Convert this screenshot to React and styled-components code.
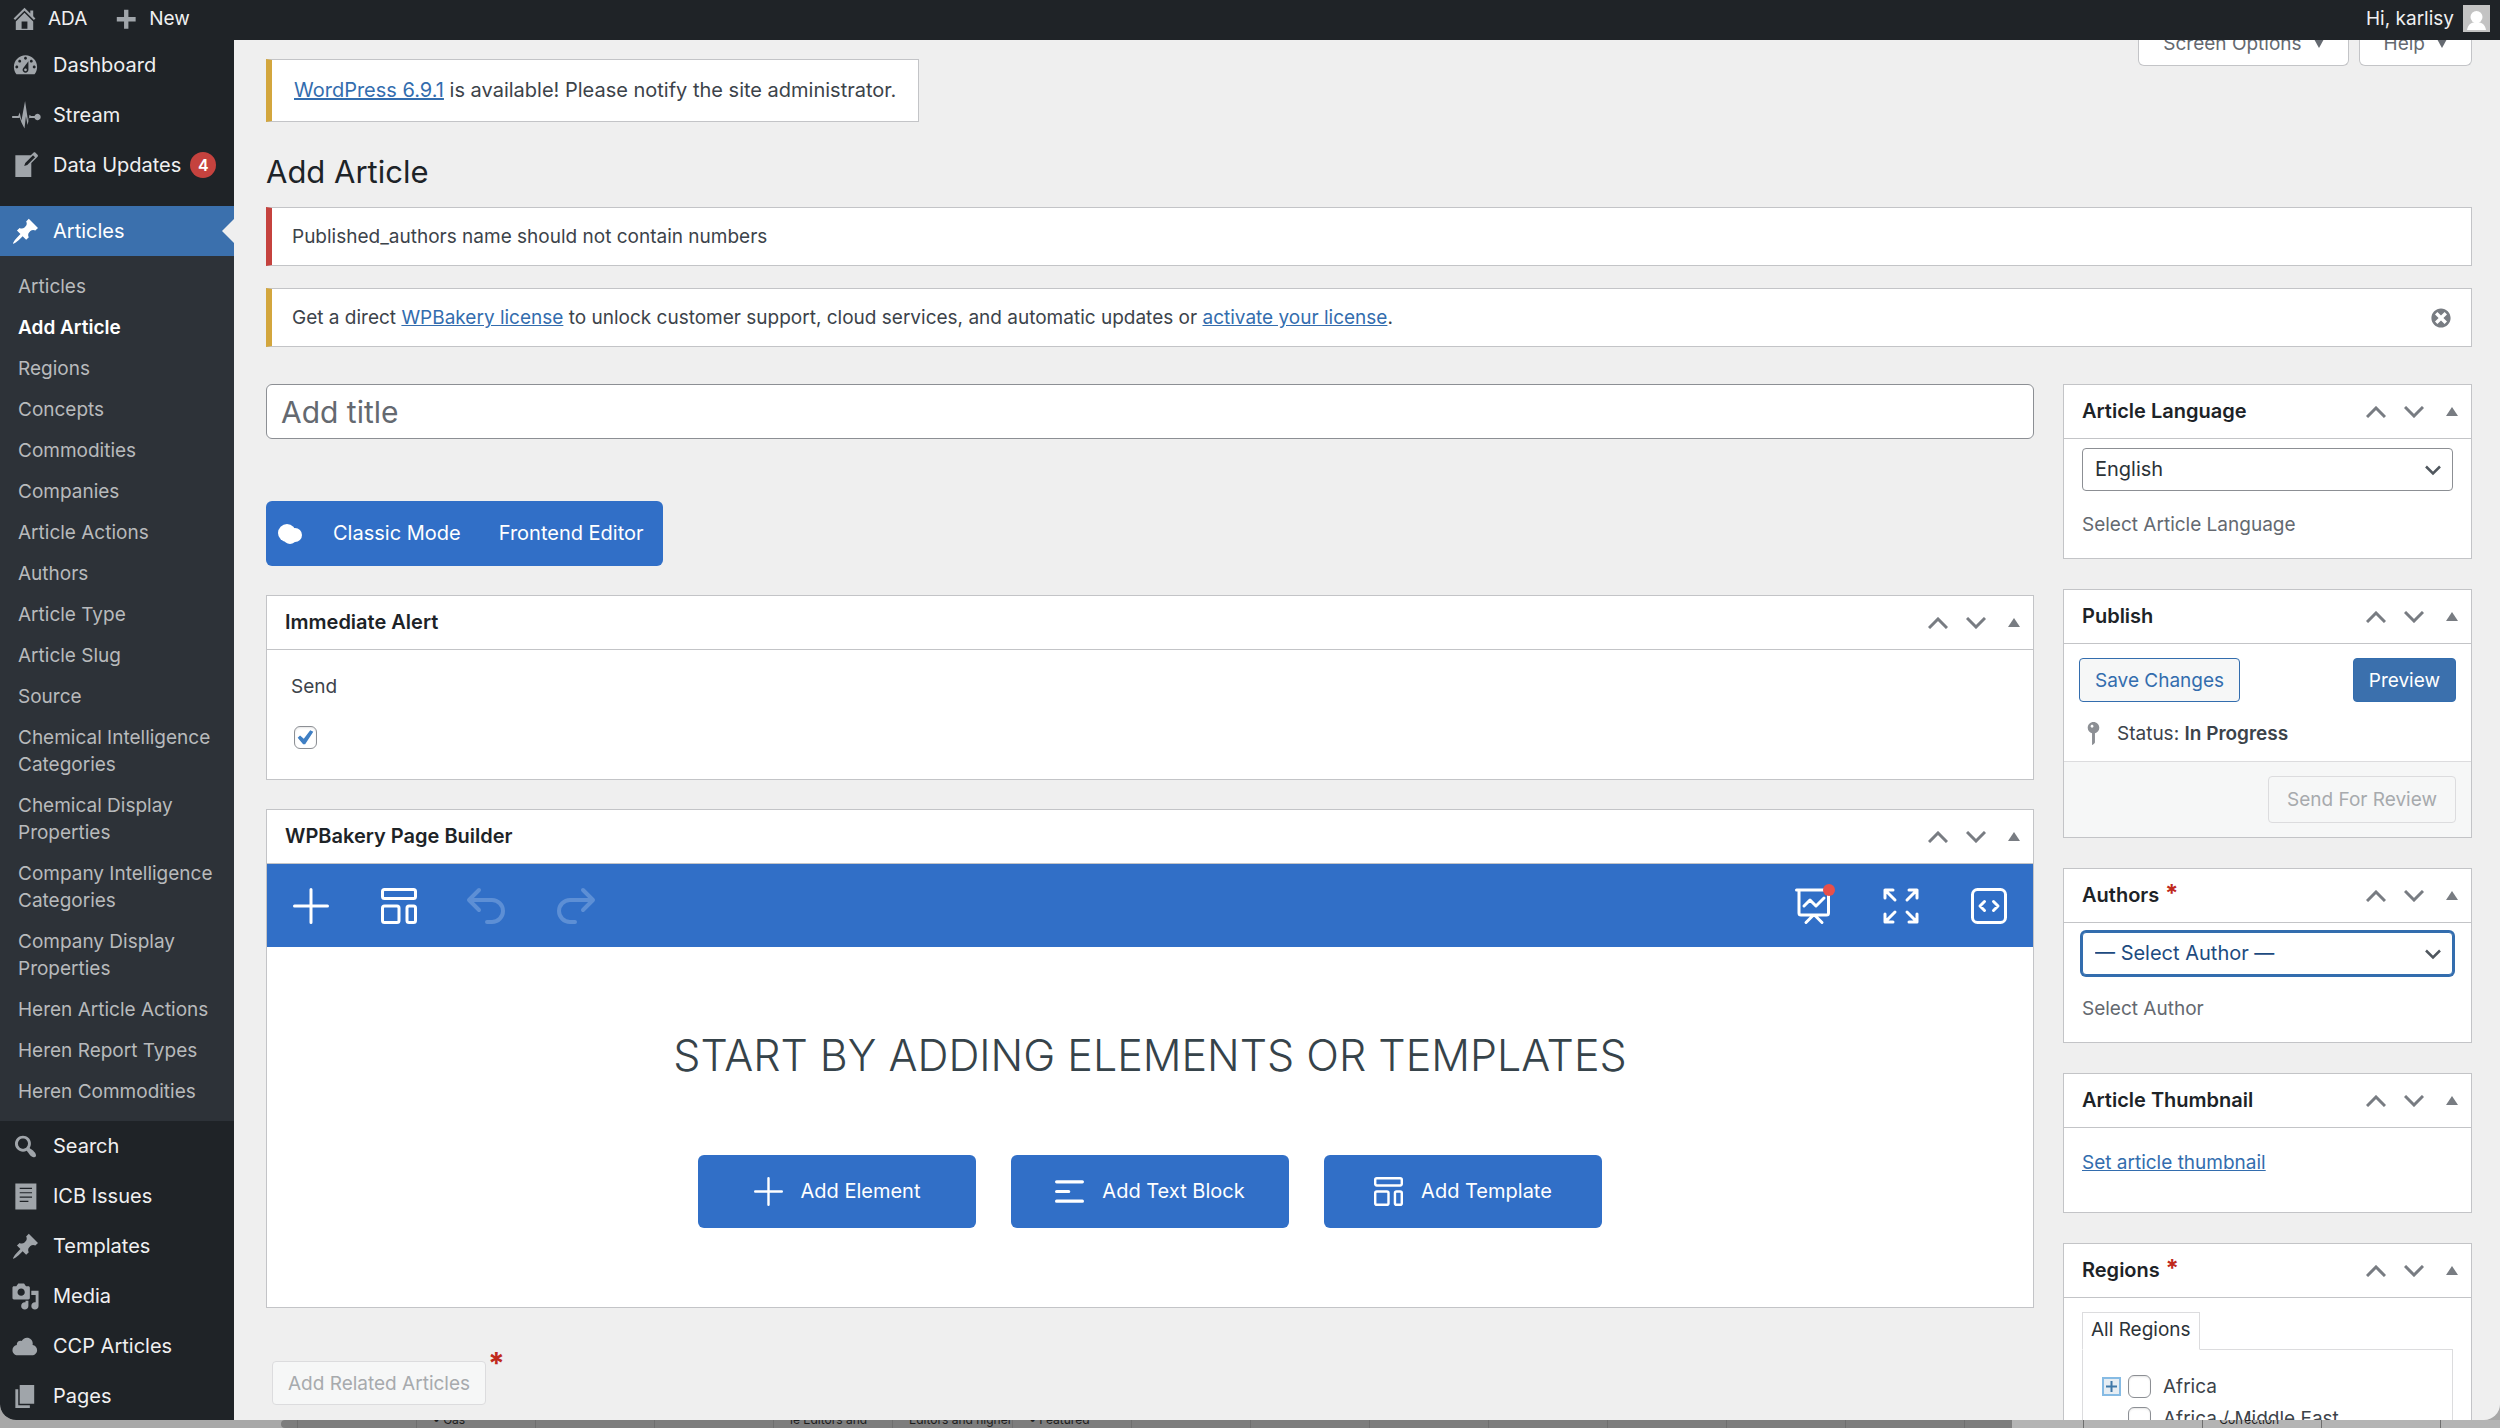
import React from 'react'
import styled, { createGlobalStyle } from 'styled-components'

const submenu = [
    'Articles', 'Add Article', 'Regions', 'Concepts', 'Commodities', 'Companies',
    'Article Actions', 'Authors', 'Article Type', 'Article Slug', 'Source',
    'Chemical Intelligence Categories', 'Chemical Display Properties',
    'Company Intelligence Categories', 'Company Display Properties',
    'Heren Article Actions', 'Heren Report Types', 'Heren Commodities',
]

const backTable = ['', '• Gas', '', '', 'le Editors and', 'Editors and higher', '• Featured', '', '', '', '', '', '', '', '', '', 'Correction', '', '']

const paths = {
    home: 'M16 8.5l1.53 1.53-1.06 1.06L10 4.6l-6.47 6.49-1.06-1.06L10 2.5l4 4v-2h2v4zm-6-2.46l6 5.99V18H4v-5.97zM12 17v-5H8v5h4z',
    plus: 'M17 9v3h-5v5H9v-5H4V9h5V4h3v5h5z',
    dashboard: 'M3.76 16h12.48c1.1-1.37 1.76-3.11 1.76-5 0-4.42-3.58-8-8-8s-8 3.58-8 8c0 1.89.66 3.63 1.76 5zM10 4c.55 0 1 .45 1 1s-.45 1-1 1-1-.45-1-1 .45-1 1-1zM6 6c.55 0 1 .45 1 1s-.45 1-1 1-1-.45-1-1 .45-1 1-1zm8 0c.55 0 1 .45 1 1s-.45 1-1 1-1-.45-1-1 .45-1 1-1zm-5.37 5.55L12 7v6c0 1.1-.9 2-2 2s-2-.9-2-2c0-.57.24-1.08.63-1.45zM4 10c.55 0 1 .45 1 1s-.45 1-1 1-1-.45-1-1 .45-1 1-1zm12 0c.55 0 1 .45 1 1s-.45 1-1 1-1-.45-1-1 .45-1 1-1zm-5 3c0-.55-.45-1-1-1s-1 .45-1 1 .45 1 1 1 1-.45 1-1z',
    stream: 'M.8 10.300H5L6 8 7.200 13.500 9.700 0 11.800 14 12.800 9.500 13.800 10.300H16.200A2.200 2.200 0 1 1 16.200 11.700H13.300L12.600 11.500 11.400 16.500 10.300 10.500 9.300 19 7.200 14.800 6 11.300 5.600 11.700H.8z',
    write: 'M16.89 1.2l1.41 1.41c.39.39.39 1.02 0 1.41L14 8.33V18H3V3h10.67l1.8-1.8c.4-.39 1.03-.4 1.42 0zm-5.66 8.48l5.37-5.36-1.42-1.42-5.36 5.37-.71 2.12z',
    pin: 'M10.44 3.02l1.82-1.82 6.36 6.35-1.83 1.82c-1.05-.68-2.48-.57-3.41.36l-.75.75c-.92.93-1.04 2.35-.35 3.41l-1.83 1.82-2.41-2.41-2.8 2.79c-.42.42-3.38 2.71-3.8 2.29s1.86-3.39 2.28-3.81l2.79-2.79L4.1 9.36l1.83-1.82c1.05.69 2.48.57 3.4-.36l.75-.75c.93-.92 1.05-2.35.36-3.41z',
    search: 'M12.14 4.18c1.87 1.87 2.11 4.75.72 6.89.12.1.22.21.36.31.2.16.47.36.81.59.34.24.56.39.66.47.42.31.73.57.94.78.32.32.6.65.84 1 .25.35.44.69.59 1.04.14.35.21.68.18 1-.02.32-.14.59-.36.81s-.49.34-.81.36c-.31.02-.65-.04-.99-.19-.35-.14-.7-.34-1.04-.59-.35-.24-.68-.52-1-.84-.21-.21-.47-.52-.77-.93-.1-.13-.25-.35-.47-.66-.22-.32-.4-.57-.56-.78-.16-.2-.29-.35-.44-.5-2.07 1.09-4.69.76-6.44-.98-2.14-2.15-2.14-5.64 0-7.78 2.15-2.15 5.63-2.15 7.78 0zm-1.41 6.36c1.36-1.37 1.36-3.58 0-4.95-1.37-1.37-3.59-1.37-4.95 0-1.37 1.37-1.37 3.58 0 4.95 1.36 1.37 3.58 1.37 4.95 0z',
    page: 'M3 1h14.5v18H3zM6 4v.8h8.500V4zM6 7v.8h8.500V7zM6 10v.8h8.500V10zM6 13v.8h6V13z',
    media: 'M13 11V4c0-.55-.45-1-1-1h-1.67L9 1H5L3.67 3H2c-.55 0-1 .45-1 1v7c0 .55.45 1 1 1h10c.55 0 1-.45 1-1zM7 4.500c1.380 0 2.500 1.120 2.500 2.500S8.380 9.500 7 9.500 4.500 8.380 4.500 7 5.620 4.500 7 4.500zM14 6h5v10.500c0 1.380-1.120 2.500-2.500 2.500S14 17.880 14 16.500s1.120-2.500 2.500-2.500c.17 0 .34.02.5.05V9h-3V6zm-4 8.050V13h2v3.500c0 1.380-1.120 2.500-2.500 2.500S7 17.880 7 16.500 8.120 14 9.500 14c.17 0 .34.02.5.05z',
    cloud: 'M14.9 9c1.8.2 3.1 1.7 3.1 3.5 0 1.9-1.6 3.5-3.5 3.5h-10C2.6 16 1 14.4 1 12.5 1 10.7 2.3 9.3 4.1 9 4 8.9 4 8.7 4 8.5 4 7.1 5.1 6 6.5 6c.3 0 .7.1.9.2C8.1 4.9 9.4 4 11 4c2.2 0 4 1.8 4 4 0 .4-.1.7-.1 1z',
    pages: 'M6 15V2h10v13H6zm-1 1h8v2H3V5h2v11z',
    dismiss: 'M10 2c4.42 0 8 3.58 8 8s-3.58 8-8 8-8-3.58-8-8 3.58-8 8-8zm5 11l-3-3 3-3-2-2-3 3-3-3-2 2 3 3-3 3 2 2 3-3 3 3z',
    status: 'M14 6c0 1.86-1.28 3.41-3 3.86V16c0 1-2 2-2 2V9.86c-1.72-.45-3-2-3-3.86 0-2.21 1.79-4 4-4s4 1.79 4 4zM8 5c0 .55.45 1 1 1s1-.45 1-1-.45-1-1-1-1 .45-1 1z',
}

function Dashicon({ name, size = 29 }) {
    return (
        <svg width={size} height={size} viewBox="0 0 20 20" fill="currentColor" fillRule="evenodd" overflow="visible" aria-hidden="true">
            <path d={paths[name]} />
        </svg>
    )
}

function LineIcon({ size = 36, width = 3, children }) {
    return (
        <svg width={size} height={size} viewBox="0 0 36 36" fill="none" stroke="currentColor" strokeWidth={width} strokeLinecap="round" strokeLinejoin="round" overflow="visible" aria-hidden="true">
            {children}
        </svg>
    )
}

const PlusLines = () => <path d="M18 1.500V34.500M1.500 18H34.500" />

const TemplateLines = () => (
    <>
        <rect x="1.500" y="1.500" width="33" height="9" rx="2" />
        <rect x="1.500" y="18" width="16.500" height="16.500" rx="2" />
        <rect x="26" y="18" width="8.500" height="16.500" rx="2" />
    </>
)

function Panel({ title, required, children }) {
    return (
        <PanelBox>
            <PanelHeader>
                <h2>{title}{required && <Required> *</Required>}</h2>
                <PanelActions>
                    <IconButton aria-label={`Move ${title} up`}>
                        <svg width="20" height="12" viewBox="0 0 20 12" fill="none" stroke="currentColor" strokeWidth="3"><path d="M1 11l9-9 9 9" /></svg>
                    </IconButton>
                    <IconButton aria-label={`Move ${title} down`}>
                        <svg width="20" height="12" viewBox="0 0 20 12" fill="none" stroke="currentColor" strokeWidth="3"><path d="M1 1l9 9 9-9" /></svg>
                    </IconButton>
                    <IconButton aria-label={`Toggle ${title}`}>
                        <svg width="12" height="10" viewBox="0 0 12 10" fill="currentColor"><path d="M6 0l6 9H0z" /></svg>
                    </IconButton>
                </PanelActions>
            </PanelHeader>
            {children}
        </PanelBox>
    )
}

function SelectField({ id, value, hint, active }) {
    return (
        <FieldBody>
            <SelectWrap>
                <Select id={id} $active={active} defaultValue={value}>
                    <option>{value}</option>
                </Select>
                <svg width="18" height="11" viewBox="0 0 18 11" fill="none" stroke="#50575e" strokeWidth="2.500"><path d="M2 1.500l7 7 7-7" /></svg>
            </SelectWrap>
            <Hint htmlFor={id}>{hint}</Hint>
        </FieldBody>
    )
}

function MenuItem({ icon, label, count, current }) {
    return (
        <MenuLink href="#" $current={current}>
            <Dashicon name={icon} />
            <span>{label}</span>
            {count && <Count>{count}</Count>}
        </MenuLink>
    )
}

function Sidebar() {
    return (
        <Side>
            <MenuItem icon="dashboard" label="Dashboard" />
            <MenuItem icon="stream" label="Stream" />
            <MenuItem icon="write" label="Data Updates" count="4" />
            <Separator />
            <MenuItem icon="pin" label="Articles" current />
            <Submenu>
                {submenu.map((item) => (
                    <li key={item}>
                        <SubLink href="#" $current={item === 'Add Article'}>{item}</SubLink>
                    </li>
                ))}
            </Submenu>
            <MenuItem icon="search" label="Search" />
            <MenuItem icon="page" label="ICB Issues" />
            <MenuItem icon="pin" label="Templates" />
            <MenuItem icon="media" label="Media" />
            <MenuItem icon="cloud" label="CCP Articles" />
            <MenuItem icon="pages" label="Pages" />
        </Side>
    )
}

function Builder() {
    return (
        <Panel title="WPBakery Page Builder">
            <Toolbar>
                <ToolButton aria-label="Add element"><LineIcon><PlusLines /></LineIcon></ToolButton>
                <ToolButton aria-label="Templates"><LineIcon><TemplateLines /></LineIcon></ToolButton>
                <ToolButton aria-label="Undo" disabled>
                    <LineIcon width={4}><path d="M10 2L0 12l10 10M1 12h22a11 11 0 0 1 0 22h-5" /></LineIcon>
                </ToolButton>
                <ToolButton aria-label="Redo" disabled>
                    <LineIcon width={4}><path d="M26 2l10 10-10 10M35 12H13a11 11 0 0 0 0 22h5" /></LineIcon>
                </ToolButton>
                <Spacer />
                <ToolButton aria-label="SEO">
                    <LineIcon>
                        <path d="M1.500 2H34M4 2V25a2 2 0 0 0 2 2H31.500a2 2 0 0 0 2-2V2M11 34.500l7-7h2l7 7M9 18l6-6 6 6 8-8" />
                        <circle cx="34" cy="2" r="6" fill="#e8504a" stroke="none" />
                    </LineIcon>
                </ToolButton>
                <ToolButton aria-label="Fullscreen">
                    <LineIcon><path d="M2 10V2h8M2 2l10 10M26 2h8v8M34 2L24 12M2 26v8h8M2 34l10-10M34 26v8h-8M34 34L24 24" /></LineIcon>
                </ToolButton>
                <ToolButton aria-label="Custom code">
                    <LineIcon><rect x="1.500" y="1.500" width="33" height="33" rx="5" /><path d="M13.500 13.500L9 18l4.500 4.500M22.500 13.500l4.500 4.500-4.500 4.500" /></LineIcon>
                </ToolButton>
            </Toolbar>
            <EmptyState>
                <h1>START BY ADDING ELEMENTS OR TEMPLATES</h1>
                <BigButtons>
                    <BigButton><LineIcon size={29}><PlusLines /></LineIcon>Add Element</BigButton>
                    <BigButton><LineIcon size={29} width={4}><path d="M2 6H34M2 18H17M2 30H34" /></LineIcon>Add Text Block</BigButton>
                    <BigButton><LineIcon size={29}><TemplateLines /></LineIcon>Add Template</BigButton>
                </BigButtons>
            </EmptyState>
        </Panel>
    )
}

function RightColumn() {
    return (
        <Column $gap="30px">
            <Panel title="Article Language">
                <SelectField id="language" value="English" hint="Select Article Language" />
            </Panel>
            <Panel title="Publish">
                <PublishBody>
                    <ButtonRow>
                        <Button>Save Changes</Button>
                        <Button $primary>Preview</Button>
                    </ButtonRow>
                    <Status>
                        <Dashicon name="status" />
                        <span>Status: <b>In Progress</b></span>
                    </Status>
                </PublishBody>
                <PublishFooter>
                    <Button $large disabled>Send For Review</Button>
                </PublishFooter>
            </Panel>
            <Panel title="Authors" required>
                <SelectField id="author" value="— Select Author —" hint="Select Author" active />
            </Panel>
            <Panel title="Article Thumbnail">
                <ThumbnailBody><Anchor href="#">Set article thumbnail</Anchor></ThumbnailBody>
            </Panel>
            <Panel title="Regions" required>
                <RegionsBody>
                    <Tab>All Regions</Tab>
                    <RegionList>
                        <RegionRow>
                            <Expand aria-label="Expand Africa">
                                <svg width="11" height="11" viewBox="0 0 11 11" stroke="#3f78a8" strokeWidth="2"><path d="M5.500 0v11M0 5.500h11" /></svg>
                            </Expand>
                            <Checkbox type="checkbox" id="africa" />
                            <label htmlFor="africa">Africa</label>
                        </RegionRow>
                        <RegionRow>
                            <ExpandSpace />
                            <Checkbox type="checkbox" id="africa-me" />
                            <label htmlFor="africa-me">Africa / Middle East</label>
                        </RegionRow>
                    </RegionList>
                </RegionsBody>
            </Panel>
        </Column>
    )
}

function App() {
    return (
        <Desktop>
            <GlobalStyle />
            <Window>
                <AdminBar>
                    <BarLink href="#"><Dashicon name="home" />ADA</BarLink>
                    <BarLink href="#"><Dashicon name="plus" />New</BarLink>
                    <Account href="#">
                        Hi, karlisy
                        <Avatar viewBox="0 0 27 27" aria-hidden="true">
                            <rect width="27" height="27" fill="#c3c3c3" />
                            <circle cx="13.500" cy="12" r="6" fill="#fff" />
                            <path d="M4 25c1-6 5-8 9.500-8s8.500 2 9.500 8z" fill="#fff" />
                        </Avatar>
                    </Account>
                </AdminBar>
                <Body>
                    <Sidebar />
                    <Main>
                        <TopRow>
                            <UpdateNag>
                                <Anchor href="#">WordPress 6.9.1</Anchor> is available! Please notify the site administrator.
                            </UpdateNag>
                            <ScreenMeta>
                                <MetaButton>Screen Options <Caret viewBox="0 0 10 9"><path d="M0 0h10L5 9z" /></Caret></MetaButton>
                                <MetaButton>Help <Caret viewBox="0 0 10 9"><path d="M0 0h10L5 9z" /></Caret></MetaButton>
                            </ScreenMeta>
                        </TopRow>
                        <PageTitle>Add Article</PageTitle>
                        <Notices>
                            <Notice $color="#c5423e">Published_authors name should not contain numbers</Notice>
                            <Notice $color="#d3a63d">
                                <p>
                                    Get a direct <Anchor href="#">WPBakery license</Anchor> to unlock customer support, cloud services, and automatic updates or <Anchor href="#">activate your license</Anchor>.
                                </p>
                                <IconButton aria-label="Dismiss this notice"><Dashicon name="dismiss" size={24} /></IconButton>
                            </Notice>
                        </Notices>
                        <Columns>
                            <Column $gap="29px">
                                <TitleInput type="text" placeholder="Add title" aria-label="Add title" />
                                <ModeBar>
                                    <svg width="24" height="20" viewBox="0 0 24 20" fill="#fff" aria-hidden="true">
                                        <circle cx="9" cy="9" r="9" /><circle cx="17" cy="11" r="7" /><ellipse cx="12" cy="15" rx="6" ry="5" />
                                    </svg>
                                    <ModeButton>Classic Mode</ModeButton>
                                    <ModeButton>Frontend Editor</ModeButton>
                                </ModeBar>
                                <Panel title="Immediate Alert">
                                    <AlertBody>
                                        <label htmlFor="send">Send</label>
                                        <Checkbox type="checkbox" id="send" defaultChecked />
                                    </AlertBody>
                                </Panel>
                                <Builder />
                                <RelatedRow>
                                    <Button disabled>Add Related Articles</Button>
                                    <Required $large>*</Required>
                                </RelatedRow>
                            </Column>
                            <RightColumn />
                        </Columns>
                    </Main>
                </Body>
            </Window>
            <BackWindow>
                {backTable.map((cell, i) => <BackCell key={i}>{cell}</BackCell>)}
            </BackWindow>
        </Desktop>
    )
}

export default App;

const GlobalStyle = createGlobalStyle`
    *{
        box-sizing:border-box;
    }
    body{
        margin:0;
        font-family:Inter, "Open Sans", sans-serif;
        font-size:19px;
        line-height:27px;
        color:#3c434a;
    }
    h1, h2, p, ul{
        margin:0;
        padding:0;
        list-style:none;
    }
    button, input, select{
        font:inherit;
        margin:0;
    }
    svg{
        display:block;
        flex-shrink:0;
    }
`
const Desktop = styled.div`
    height:100vh;
    display:flex;
    flex-direction:column;
    background-color:#a8a8a8;
`
const Window = styled.div`
    flex:1;
    min-height:0;
    display:flex;
    flex-direction:column;
    overflow:hidden;
    border-radius:0 0 16px 16px;
    background-color:#efefef;
`
const BackWindow = styled.div`
    height:8px;
    margin-left:281px;
    padding-left:16px;
    display:flex;
    overflow:hidden;
    border-radius:4px 0 0 4px;
    background:linear-gradient(to right, #7d7d7d 78%, #b4b4b4 78%);
`
const BackCell = styled.span`
    flex:0 0 119px;
    display:flex;
    align-items:flex-end;
    padding-left:16px;
    border-left:1px solid #6f6f6f;
    font-size:12px;
    line-height:16px;
    white-space:nowrap;
    color:#1c1c1c;
`
const AdminBar = styled.header`
    flex:0 0 40px;
    display:flex;
    align-items:center;
    padding:0 10px 3px;
    gap:24px;
    background-color:#1f2327;
    z-index:1;
`
const BarLink = styled.a`
    display:flex;
    align-items:center;
    gap:9px;
    color:#f0f0f1;
    text-decoration:none;
    svg{
        color:#a0a5aa;
    }
`
const Account = styled(BarLink)`
    margin-left:auto;
`
const Avatar = styled.svg`
    width:27px;
    height:27px;
`
const Body = styled.div`
    flex:1;
    min-height:0;
    display:flex;
`
const Side = styled.nav`
    flex:0 0 234px;
    background-color:#1f2327;
`
const MenuLink = styled.a`
    height:50px;
    display:flex;
    align-items:center;
    padding-left:11px;
    gap:13px;
    font-size:20px;
    color:${(p) => (p.$current ? '#fff' : '#f0f0f1')};
    background-color:${(p) => (p.$current ? '#3b70ad' : 'transparent')};
    text-decoration:none;
    white-space:nowrap;
    svg{
        color:${(p) => (p.$current ? '#fff' : '#a0a5aa')};
    }
    &::after{
        content:'';
        display:${(p) => (p.$current ? 'block' : 'none')};
        margin-left:auto;
        border:12px solid transparent;
        border-left:0;
        border-right-color:#efefef;
    }
`
const Count = styled.span`
    width:26px;
    height:26px;
    border-radius:13px;
    margin-left:-4px;
    background-color:#c5423e;
    color:#fff;
    font-size:16px;
    font-weight:600;
    line-height:26px;
    text-align:center;
`
const Separator = styled.div`
    height:16px;
`
const Submenu = styled.ul`
    && {
        padding:10px 0 9px;
    }
    background-color:#2d3238;
`
const SubLink = styled.a`
    display:block;
    padding:7px 18px;
    color:${(p) => (p.$current ? '#fff' : '#b8babc')};
    font-weight:${(p) => (p.$current ? 600 : 400)};
    text-decoration:none;
`
const Main = styled.main`
    flex:1;
    min-width:0;
    padding:0 28px 0 32px;
`
const TopRow = styled.div`
    display:flex;
    justify-content:space-between;
    align-items:flex-start;
`
const UpdateNag = styled.div`
    margin-top:19px;
    padding:17px 22px;
    border:1px solid #c3c4c7;
    border-left:6px solid #d3a63d;
    background-color:#fff;
    font-size:20px;
`
const Anchor = styled.a`
    color:#336dae;
    text-decoration:underline;
`
const ScreenMeta = styled.div`
    display:flex;
    gap:10px;
    margin-top:-18px;
`
const MetaButton = styled.button`
    display:flex;
    align-items:center;
    gap:12px;
    height:44px;
    padding:0 24px;
    border:1px solid #c3c4c7;
    border-top:0;
    border-radius:0 0 6px 6px;
    background-color:#fff;
    color:#646970;
`
const Caret = styled.svg`
    width:10px;
    height:9px;
    fill:#646970;
`
const PageTitle = styled.h1`
    padding:29px 0 14px;
    font-size:31px;
    font-weight:400;
    line-height:42px;
    color:#1d2327;
`
const Notices = styled.div`
    display:flex;
    flex-direction:column;
    gap:22px;
`
const Notice = styled.div`
    height:59px;
    display:flex;
    align-items:center;
    justify-content:space-between;
    padding:0 11px 0 20px;
    border:1px solid #c3c4c7;
    border-left:6px solid ${(p) => p.$color};
    background-color:#fff;
`
const IconButton = styled.button`
    width:38px;
    height:38px;
    display:flex;
    align-items:center;
    justify-content:center;
    padding:0;
    border:0;
    background:none;
    color:#787c82;
`
const Columns = styled.div`
    display:grid;
    grid-template-columns:minmax(0, 1fr) 409px;
    gap:29px;
    align-items:start;
    padding-top:37px;
`
const Column = styled.div`
    display:flex;
    flex-direction:column;
    align-items:stretch;
    gap:${(p) => p.$gap};
`
const TitleInput = styled.input`
    height:55px;
    padding:0 14px;
    margin-bottom:33px;
    border:1px solid #8c8f94;
    border-radius:6px;
    background-color:#fff;
    font-size:30px;
    &::placeholder{
        color:#646970;
    }
`
const ModeBar = styled.div`
    align-self:flex-start;
    height:65px;
    display:flex;
    align-items:center;
    padding:0 0 0 12px;
    border-radius:6px;
    background-color:#316fc7;
    svg{
        margin-right:12px;
    }
`
const ModeButton = styled.button`
    height:65px;
    padding:0 19px;
    border:0;
    background:none;
    color:#fff;
    font-size:20px;
`
const PanelBox = styled.section`
    border:1px solid #c3c4c7;
    background-color:#fff;
`
const PanelHeader = styled.div`
    height:54px;
    display:flex;
    align-items:center;
    justify-content:space-between;
    padding:0 0 0 18px;
    border-bottom:1px solid #c3c4c7;
    h2{
        font-size:20px;
        font-weight:600;
        color:#1d2327;
    }
`
const PanelActions = styled.div`
    display:flex;
`
const Required = styled.span`
    color:#c0291c;
    font-size:${(p) => (p.$large ? '30px' : '24px')};
    font-weight:700;
    line-height:20px;
`
const AlertBody = styled.div`
    display:flex;
    flex-direction:column;
    align-items:flex-start;
    gap:26px;
    padding:23px 24px 30px;
`
const Checkbox = styled.input`
    appearance:none;
    width:23px;
    height:23px;
    flex-shrink:0;
    display:grid;
    place-items:center;
    margin-left:3px;
    border:1px solid #8c8f94;
    border-radius:6px;
    background-color:#fff;
    box-shadow:inset 0 1px 2px rgba(0, 0, 0, .1);
    &:checked::before{
        content:'';
        width:17px;
        height:17px;
        background-color:#3f7fc4;
        clip-path:polygon(4% 52%, 18% 38%, 40% 58%, 78% 8%, 96% 16%, 48% 90%, 36% 90%);
    }
`
const Toolbar = styled.div`
    height:83px;
    display:flex;
    background-color:#316fc7;
`
const ToolButton = styled.button`
    width:88px;
    display:flex;
    align-items:center;
    justify-content:center;
    padding:0;
    border:0;
    background:none;
    color:#fff;
    &:disabled{
        color:#5d8fd5;
    }
`
const Spacer = styled.div`
    flex:1;
`
const EmptyState = styled.div`
    padding:79px 0;
    text-align:center;
    h1{
        font-size:43px;
        font-weight:300;
        line-height:58px;
        color:#36434a;
    }
`
const BigButtons = styled.div`
    display:flex;
    justify-content:center;
    gap:35px;
    padding-top:71px;
`
const BigButton = styled.button`
    width:278px;
    height:73px;
    display:flex;
    align-items:center;
    justify-content:center;
    gap:18px;
    padding:0;
    border:0;
    border-radius:6px;
    background-color:#316fc7;
    color:#fff;
    font-size:20px;
`
const Button = styled.button`
    height:${(p) => (p.$large ? '47px' : '44px')};
    padding:0 ${(p) => (p.$large ? '18px' : '15px')};
    border:1px solid #336dae;
    border-radius:4px;
    background-color:${(p) => (p.$primary ? '#3b70ad' : '#f6f7f7')};
    color:${(p) => (p.$primary ? '#fff' : '#336dae')};
    &:disabled{
        border-color:#dcdcde;
        color:#a7aaad;
    }
`
const RelatedRow = styled.div`
    display:flex;
    align-items:flex-start;
    gap:2px;
    padding:16px 0 0 6px;
    ${Button}{
        margin-top:8px;
    }
`
const FieldBody = styled.div`
    display:flex;
    flex-direction:column;
    gap:20px;
    padding:9px 18px 20px;
`
const SelectWrap = styled.div`
    position:relative;
    svg{
        position:absolute;
        right:11px;
        top:17px;
        pointer-events:none;
    }
`
const Select = styled.select`
    appearance:none;
    width:100%;
    height:43px;
    padding:0 36px 0 12px;
    border:1px solid ${(p) => (p.$active ? '#336dae' : '#8c8f94')};
    border-radius:4px;
    box-shadow:${(p) => (p.$active ? '0 0 0 2px #336dae' : 'none')};
    background-color:#fff;
    color:${(p) => (p.$active ? '#1d4b7f' : '#2c3338')};
    font-size:20px;
`
const Hint = styled.label`
    color:#646970;
`
const PublishBody = styled.div`
    padding:14px 15px;
`
const ButtonRow = styled.div`
    display:flex;
    justify-content:space-between;
`
const Status = styled.div`
    display:flex;
    align-items:center;
    gap:9px;
    height:27px;
    margin-top:18px;
    svg{
        color:#8c8f94;
    }
    b{
        font-weight:600;
    }
`
const PublishFooter = styled.div`
    display:flex;
    justify-content:flex-end;
    padding:14px 15px;
    border-top:1px solid #dcdcde;
    background-color:#f6f7f7;
`
const ThumbnailBody = styled.div`
    padding:21px 18px 36px;
`
const RegionsBody = styled.div`
    padding:14px 18px;
`
const Tab = styled.button`
    height:38px;
    margin-bottom:-1px;
    padding:0 8px 3px;
    display:block;
    position:relative;
    border:1px solid #dcdcde;
    border-bottom-color:#fff;
    background-color:#fff;
    color:#2c3338;
`
const RegionList = styled.div`
    padding:20px 19px;
    border:1px solid #dcdcde;
`
const RegionRow = styled.div`
    height:32px;
    display:flex;
    align-items:center;
    gap:4px;
    label{
        margin-left:8px;
    }
`
const Expand = styled.button`
    width:19px;
    height:19px;
    display:flex;
    align-items:center;
    justify-content:center;
    padding:0;
    border:2px solid #86bbe4;
    background-color:#e6edf3;
`
const ExpandSpace = styled.span`
    width:19px;
`
